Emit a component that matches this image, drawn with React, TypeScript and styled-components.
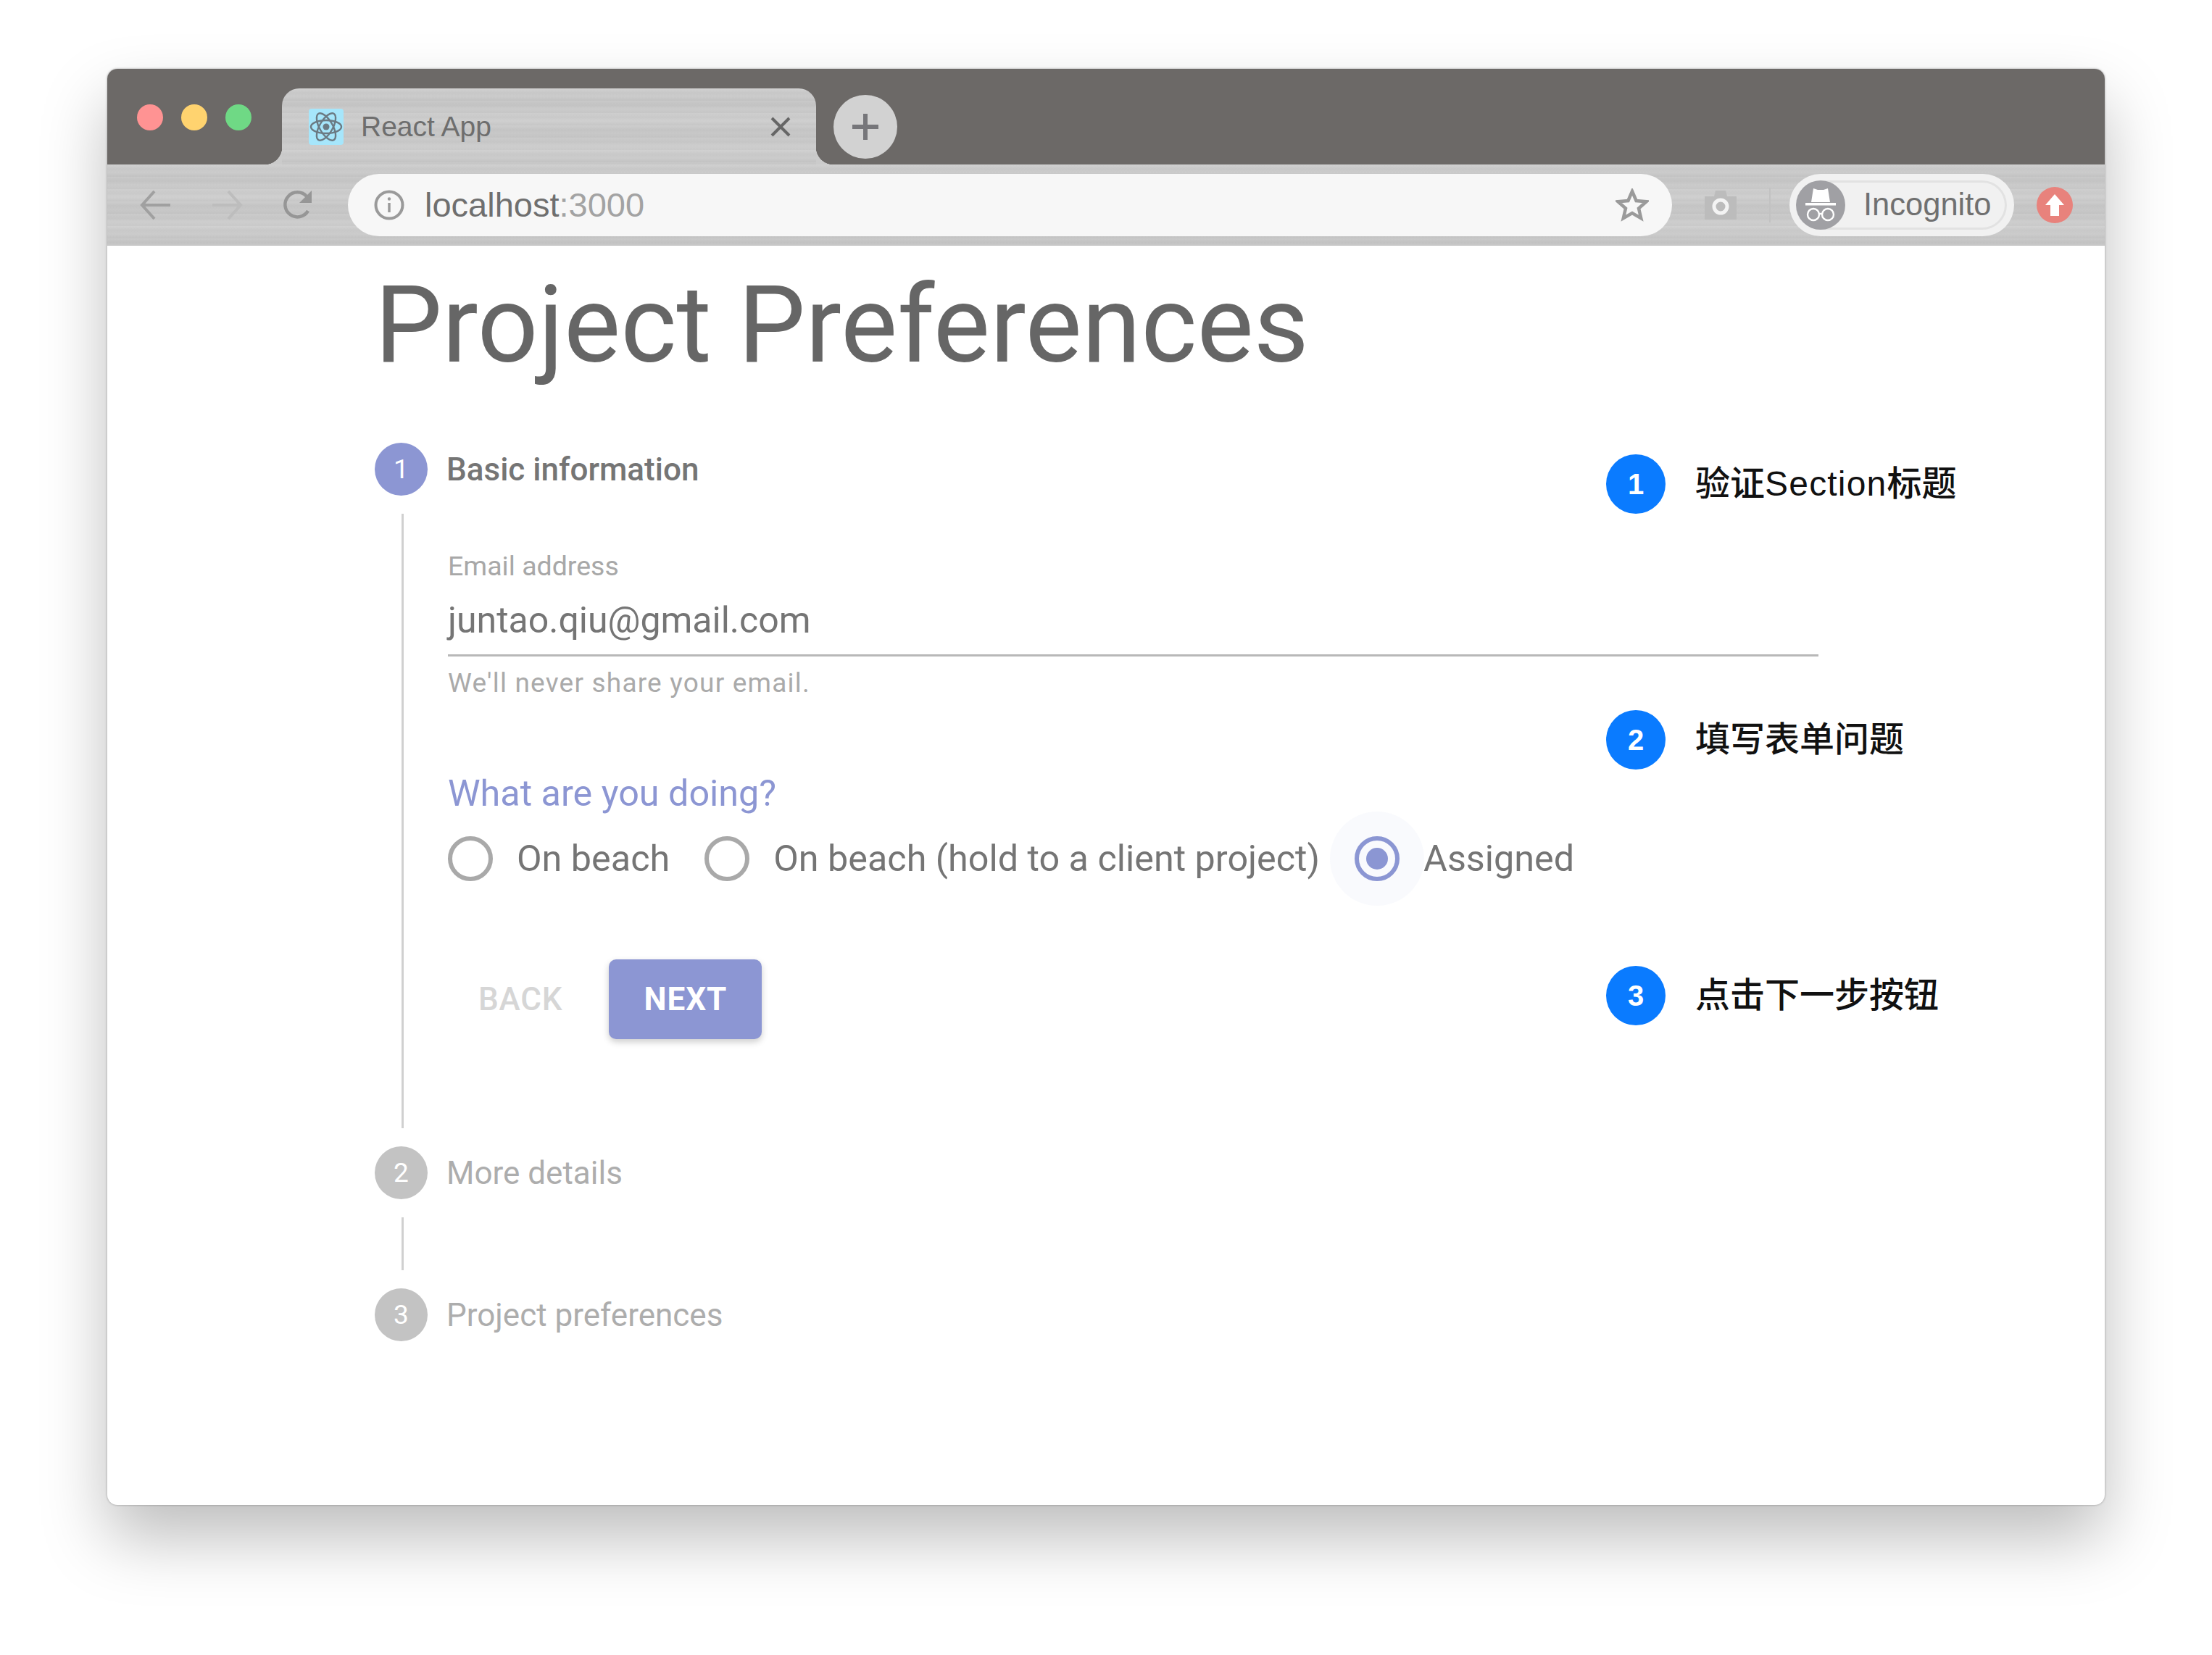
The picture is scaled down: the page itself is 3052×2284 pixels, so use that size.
import styled, { createGlobalStyle, css } from "styled-components";

const GlobalStyle = createGlobalStyle`
  html, body {
    margin: 0;
    padding: 0;
    background: #fff;
  }
  * {
    box-sizing: border-box;
  }
`;

const uiFont = `"Liberation Sans", "Noto Sans", sans-serif`;
const pageFont = `Roboto, "Liberation Sans", sans-serif`;

const indigo = "#8c96d3";

// the chrome in the picture is a blurred brushed metal texture
const brushed = css`
  background-color: #cbcbcb;
  background-image:
    repeating-linear-gradient(
      180deg,
      rgba(255, 255, 255, 0.07) 0,
      rgba(0, 0, 0, 0.015) 6px,
      rgba(255, 255, 255, 0.05) 11px,
      rgba(0, 0, 0, 0.02) 17px
    ),
    repeating-linear-gradient(
      180deg,
      rgba(255, 255, 255, 0.05) 0,
      rgba(0, 0, 0, 0.03) 19px,
      rgba(255, 255, 255, 0.05) 43px
    );
`;

const Stage = styled.div`
  width: 3052px;
  height: 2284px;
  padding: 95px 0 0 148px;
  overflow: hidden;
`;

const BrowserWindow = styled.div`
  width: 2756px;
  height: 1982px;
  display: flex;
  flex-direction: column;
  background: #fff;
  border-radius: 14px;
  box-shadow: 0 46px 90px rgba(0, 0, 0, 0.26), 0 0 3px rgba(0, 0, 0, 0.35);
`;

const TabStrip = styled.div`
  height: 132px;
  flex: none;
  display: flex;
  align-items: flex-end;
  padding-left: 41px;
  background: #6c6967;
  border-radius: 14px 14px 0 0;
`;

const TrafficLights = styled.div`
  display: flex;
  gap: 25px;
  width: 200px;
  align-self: flex-start;
  padding-top: 49px;
`;

const Light = styled.span<{ $color: string }>`
  width: 36px;
  height: 36px;
  border-radius: 50%;
  background: ${(p) => p.$color};
`;

const Tab = styled.div`
  position: relative;
  width: 737px;
  height: 105px;
  display: flex;
  align-items: center;
  padding: 0 34px 0 37px;
  border-radius: 24px 24px 0 0;
  ${brushed}

  &::before,
  &::after {
    content: "";
    position: absolute;
    bottom: 0;
    width: 24px;
    height: 24px;
  }
  &::before {
    left: -24px;
    background: radial-gradient(circle at 0 0, #6c6967 24px, #cbcbcb 24.5px);
  }
  &::after {
    right: -24px;
    background: radial-gradient(circle at 100% 0, #6c6967 24px, #cbcbcb 24.5px);
  }
`;

const TabTitle = styled.span`
  flex: 1;
  margin-left: 24px;
  font: 39px ${uiFont};
  color: #6e6e6e;
`;

const NewTab = styled.div`
  width: 88px;
  height: 88px;
  margin: 0 0 8px 24px;
  display: flex;
  align-items: center;
  justify-content: center;
  border-radius: 50%;
  background: #d2d2d2;
`;

const Toolbar = styled.div`
  height: 112px;
  flex: none;
  display: flex;
  align-items: center;
  padding-left: 45px;
  border-bottom: 1px solid #bdbdbd;
  ${brushed}
`;

const NavButtons = styled.div`
  display: flex;
  align-items: center;
  gap: 54px;
  width: 287px;
`;

const AddressBar = styled.div`
  width: 1827px;
  height: 86px;
  display: flex;
  align-items: center;
  padding: 0 32px 0 36px;
  border-radius: 43px;
  background: #f7f7f7;
`;

const Url = styled.span`
  flex: 1;
  margin-left: 28px;
  font: 47px ${uiFont};
  color: #6f6f6f;

  em {
    font-style: normal;
    color: #a3a3a3;
  }
`;

const CameraSlot = styled.div`
  width: 136px;
  height: 48px;
  display: flex;
  align-items: center;
  justify-content: center;
  border-right: 2px solid #c2c2c2;
`;

const IncognitoPill = styled.div`
  width: 310px;
  height: 86px;
  margin-left: 26px;
  padding: 9px 10px 9px 10px;
  border-radius: 43px;
  background: #f1f1f1;
`;

const IncognitoInner = styled.div`
  height: 68px;
  display: flex;
  align-items: center;
  gap: 25px;
  border-radius: 34px;
  border: 3px solid #e2e2e2;
  border-left: none;
  font: 43.5px ${uiFont};
  color: #707070;
`;

const UpdateBadge = styled.div`
  width: 50px;
  height: 50px;
  margin-left: 31px;
  display: flex;
  align-items: center;
  justify-content: center;
  border-radius: 50%;
  background: #e8827c;
`;

const Content = styled.div`
  position: relative;
  flex: 1;
  padding-left: 369px;
  font-family: ${pageFont};
`;

const Title = styled.h1`
  margin: 0;
  height: 272px;
  font-size: 147.5px;
  line-height: 220px;
  font-weight: 400;
  color: #666;
  white-space: nowrap;
`;

const Stepper = styled.div`
  width: 1992px;
  display: flex;
  flex-direction: column;
  gap: 25px;
`;

const StepHeader = styled.div`
  display: flex;
  align-items: center;
  gap: 26px;
`;

const StepNumber = styled.span<{ $active?: boolean }>`
  width: 73px;
  height: 73px;
  display: flex;
  align-items: center;
  justify-content: center;
  border-radius: 50%;
  background: ${(p) => (p.$active ? indigo : "#c3c3c3")};
  color: #fff;
  font-size: 37px;
`;

const StepLabel = styled.span<{ $active?: boolean }>`
  font-size: 44px;
  font-weight: ${(p) => (p.$active ? 500 : 400)};
  color: ${(p) => (p.$active ? "#757575" : "#adadad")};
`;

const Connector = styled.div<{ $height: number }>`
  height: ${(p) => p.$height}px;
  margin-left: 37px;
  border-left: 3px solid #d0d0d0;
`;

const StepBody = styled(Connector)`
  padding: 50px 0 0 61px;
`;

const FieldLabel = styled.div`
  font-size: 37.5px;
  line-height: 44px;
  color: #a8a8a8;
`;

const FieldValue = styled.div`
  height: 80px;
  margin-top: 23px;
  border-bottom: 3px solid #b8b8b8;
  font-size: 50px;
  line-height: 60px;
  color: #757575;
`;

const FieldHint = styled.div`
  margin-top: 17px;
  font-size: 37px;
  line-height: 40px;
  letter-spacing: 1.2px;
  color: #aaa;
`;

const Question = styled.div`
  margin-top: 102px;
  font-size: 50.3px;
  line-height: 60px;
  color: ${indigo};
`;

const RadioGroup = styled.div`
  margin-top: 29px;
  display: flex;
  align-items: center;
  gap: 48px;
`;

const RadioOption = styled.label`
  display: flex;
  align-items: center;
  gap: 33px;
  font-size: 50.3px;
  line-height: 60px;
  color: #757575;
`;

const RadioCircle = styled.span<{ $checked?: boolean }>`
  position: relative;
  width: 62px;
  height: 62px;
  flex: none;
  display: flex;
  align-items: center;
  justify-content: center;
  border-radius: 50%;
  border: 6px solid ${(p) => (p.$checked ? indigo : "#a9a9a9")};

  ${(p) =>
    p.$checked &&
    css`
      &::before {
        content: "";
        position: absolute;
        inset: -40px;
        border-radius: 50%;
        background: rgba(140, 150, 211, 0.05);
      }
      &::after {
        content: "";
        width: 30px;
        height: 30px;
        border-radius: 50%;
        background: ${indigo};
      }
    `}
`;

const Actions = styled.div`
  margin-top: 108px;
  display: flex;
  align-items: center;
  gap: 22px;
`;

const BackButton = styled.div`
  padding: 0 42px;
  font-size: 44px;
  font-weight: 500;
  letter-spacing: 0.8px;
  color: #d6d6d6;
`;

const NextButton = styled.div`
  width: 211px;
  height: 110px;
  display: flex;
  align-items: center;
  justify-content: center;
  border-radius: 10px;
  background: ${indigo};
  box-shadow: 0 4px 10px rgba(0, 0, 0, 0.2);
  font-size: 44px;
  font-weight: 700;
  letter-spacing: 1px;
  color: #fff;
`;

// numbered notes sit on top of the app page, they are not part of it
const Callouts = styled.div`
  position: absolute;
  left: 2068px;
  top: 288px;
  display: flex;
  flex-direction: column;
  gap: 271px;
`;

const Callout = styled.div`
  height: 82px;
  display: flex;
  align-items: center;
  gap: 41px;
  font: 500 48px ${uiFont}, "Noto Sans CJK SC", sans-serif;
  color: #111;
  white-space: nowrap;
`;

const CalloutNumber = styled.span`
  width: 82px;
  height: 82px;
  display: flex;
  align-items: center;
  justify-content: center;
  border-radius: 50%;
  background: #0a7bff;
  color: #fff;
  font: 700 40px ${uiFont};
`;

const CalloutText = styled.span`
  margin-top: -10px;

  em {
    font-style: normal;
    letter-spacing: 1.2px;
  }
`;

const ReactLogo = () => (
  <svg width="48" height="50" viewBox="0 0 48 50">
    <rect width="48" height="50" rx="4" fill="#a6e6fb" />
    <g fill="none" stroke="#6b7a83" strokeWidth="2.4">
      <ellipse cx="24" cy="25" rx="21" ry="9" />
      <ellipse cx="24" cy="25" rx="21" ry="9" transform="rotate(60 24 25)" />
      <ellipse cx="24" cy="25" rx="21" ry="9" transform="rotate(120 24 25)" />
    </g>
    <circle cx="24" cy="25" r="4.5" fill="#6b7a83" />
  </svg>
);

const CloseIcon = () => (
  <svg width="30" height="30" viewBox="0 0 30 30">
    <path d="M3 3 L27 27 M27 3 L3 27" stroke="#666" strokeWidth="4" />
  </svg>
);

const PlusIcon = () => (
  <svg width="38" height="38" viewBox="0 0 38 38">
    <path d="M19 1 V37 M1 19 H37" stroke="#76767a" strokeWidth="6" />
  </svg>
);

const ArrowIcon = ({ right, color }: { right?: boolean; color: string }) => (
  <svg width="44" height="44" viewBox="0 0 44 44">
    <path
      d={right ? "M2 22 H41 M24 3 L41 22 L24 41" : "M42 22 H3 M20 3 L3 22 L20 41"}
      fill="none"
      stroke={color}
      strokeWidth="4"
    />
  </svg>
);

const ReloadIcon = () => (
  <svg width="44" height="44" viewBox="0 0 44 44">
    <path d="M36 30 A17 17 0 1 1 34 10" fill="none" stroke="#969696" strokeWidth="4.5" />
    <path d="M41 2 V19 H24 Z" fill="#969696" />
  </svg>
);

const InfoIcon = () => (
  <svg width="42" height="42" viewBox="0 0 42 42" style={{ flex: "none" }}>
    <circle cx="21" cy="21" r="18.5" fill="none" stroke="#9a9a9a" strokeWidth="4" />
    <path d="M21 18 V31" stroke="#9a9a9a" strokeWidth="3.5" />
    <circle cx="21" cy="12.5" r="2.2" fill="#9a9a9a" />
  </svg>
);

const StarIcon = () => (
  <svg width="46" height="46" viewBox="0 0 46 46" style={{ flex: "none" }}>
    <path
      d="M23 4 L28.6 17 L42.6 18.2 L32 27.5 L35.2 41.2 L23 34 L10.8 41.2 L14 27.5 L3.4 18.2 L17.4 17 Z"
      fill="none"
      stroke="#9a9a9a"
      strokeWidth="4.5"
    />
  </svg>
);

const CameraIcon = () => (
  <svg width="44" height="40" viewBox="0 0 44 40">
    <path d="M0 8 H13 L15 0 H29 L31 8 H44 V40 H0 Z" fill="#bcbcbc" />
    <circle cx="22" cy="22" r="9" fill="none" stroke="#f4f4f4" strokeWidth="5" />
  </svg>
);

const IncognitoAvatar = () => (
  <svg width="68" height="68" viewBox="0 0 68 68" style={{ flex: "none", marginLeft: -1 }}>
    <circle cx="34" cy="34" r="34" fill="#a0a0a4" />
    <path d="M21 30 L24 11 L30 13 H38 L44 11 L47 30 Z" fill="#fff" />
    <rect x="13" y="31" width="42" height="3.5" fill="#fff" />
    <circle cx="24" cy="47" r="8" fill="none" stroke="#fff" strokeWidth="2.4" />
    <circle cx="44" cy="47" r="8" fill="none" stroke="#fff" strokeWidth="2.4" />
    <path d="M32 46 H36" stroke="#fff" strokeWidth="2.4" />
  </svg>
);

const UpArrow = () => (
  <svg width="26" height="30" viewBox="0 0 26 30">
    <path d="M13 0 L26 15 H19 V30 H7 V15 H0 Z" fill="#fff" />
  </svg>
);

const App = () => {
  return (
    <Stage>
      <GlobalStyle />
      <BrowserWindow>
        <TabStrip>
          <TrafficLights>
            <Light $color="#ff9393" />
            <Light $color="#ffd36f" />
            <Light $color="#6fd985" />
          </TrafficLights>
          <Tab>
            <ReactLogo />
            <TabTitle>React App</TabTitle>
            <CloseIcon />
          </Tab>
          <NewTab>
            <PlusIcon />
          </NewTab>
        </TabStrip>

        <Toolbar>
          <NavButtons>
            <ArrowIcon color="#a0a0a0" />
            <ArrowIcon right color="#bdbdbd" />
            <ReloadIcon />
          </NavButtons>
          <AddressBar>
            <InfoIcon />
            <Url>
              localhost<em>:3000</em>
            </Url>
            <StarIcon />
          </AddressBar>
          <CameraSlot>
            <CameraIcon />
          </CameraSlot>
          <IncognitoPill>
            <IncognitoInner>
              <IncognitoAvatar />
              Incognito
            </IncognitoInner>
          </IncognitoPill>
          <UpdateBadge>
            <UpArrow />
          </UpdateBadge>
        </Toolbar>

        <Content>
          <Title>Project Preferences</Title>
          <Stepper>
            <StepHeader>
              <StepNumber $active>1</StepNumber>
              <StepLabel $active>Basic information</StepLabel>
            </StepHeader>
            <StepBody $height={848}>
              <FieldLabel>Email address</FieldLabel>
              <FieldValue>juntao.qiu@gmail.com</FieldValue>
              <FieldHint>We'll never share your email.</FieldHint>
              <Question>What are you doing?</Question>
              <RadioGroup>
                <RadioOption>
                  <RadioCircle />
                  On beach
                </RadioOption>
                <RadioOption>
                  <RadioCircle />
                  On beach (hold to a client project)
                </RadioOption>
                <RadioOption>
                  <RadioCircle $checked />
                  Assigned
                </RadioOption>
              </RadioGroup>
              <Actions>
                <BackButton>BACK</BackButton>
                <NextButton>NEXT</NextButton>
              </Actions>
            </StepBody>
            <StepHeader>
              <StepNumber>2</StepNumber>
              <StepLabel>More details</StepLabel>
            </StepHeader>
            <Connector $height={73} />
            <StepHeader>
              <StepNumber>3</StepNumber>
              <StepLabel>Project preferences</StepLabel>
            </StepHeader>
          </Stepper>

          <Callouts>
            <Callout>
              <CalloutNumber>1</CalloutNumber>
              <CalloutText>验证<em>Section</em>标题</CalloutText>
            </Callout>
            <Callout>
              <CalloutNumber>2</CalloutNumber>
              <CalloutText>填写表单问题</CalloutText>
            </Callout>
            <Callout>
              <CalloutNumber>3</CalloutNumber>
              <CalloutText>点击下一步按钮</CalloutText>
            </Callout>
          </Callouts>
        </Content>
      </BrowserWindow>
    </Stage>
  );
};

export default App;
